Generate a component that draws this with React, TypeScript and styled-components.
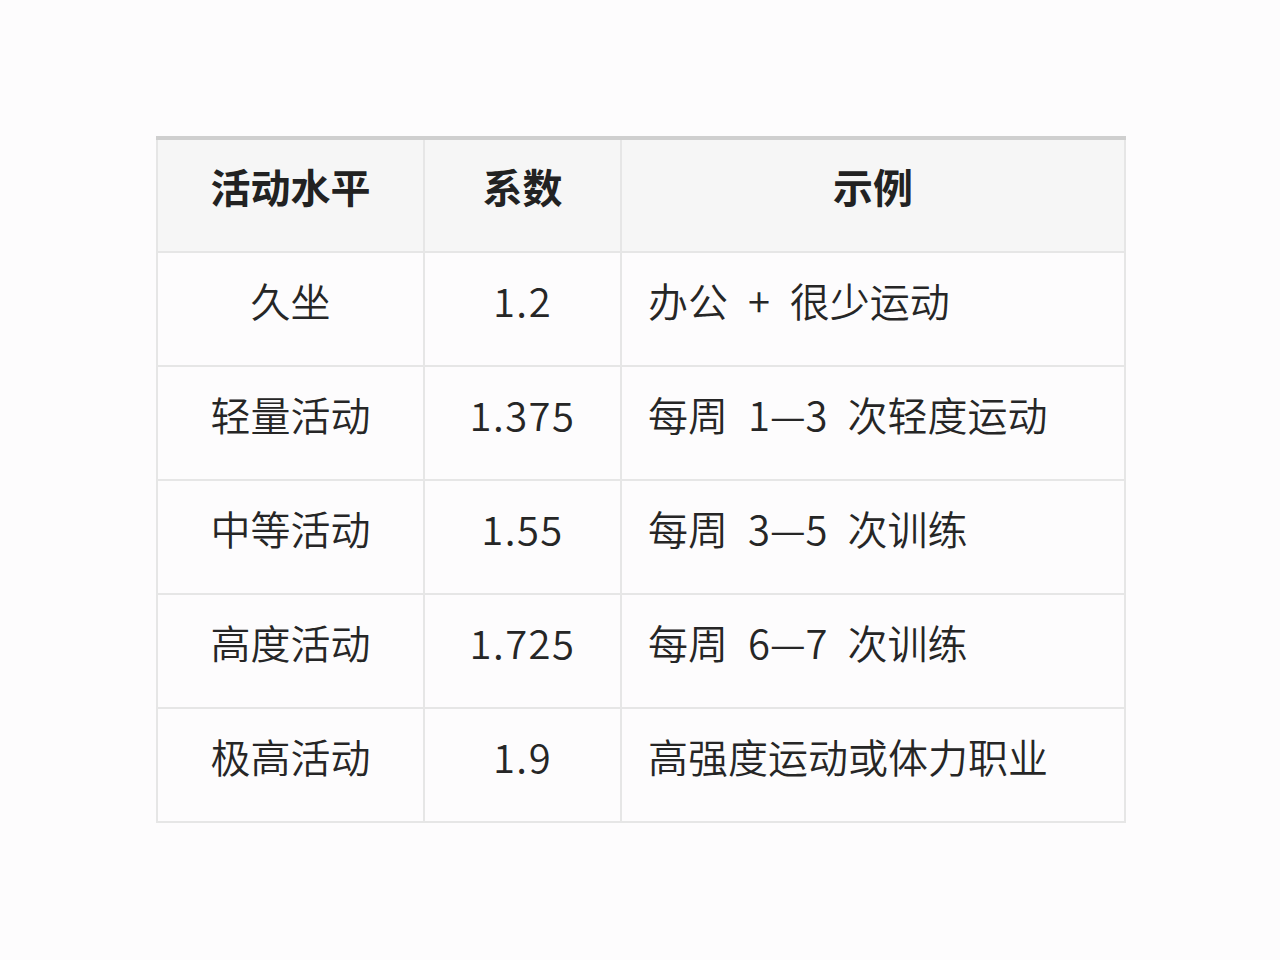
import React from 'react'
import styled, { createGlobalStyle } from 'styled-components'

const GlobalStyle = createGlobalStyle`
  html, body {
    margin: 0;
    padding: 0;
    background: #fdfcfd;
  }
  body {
    font-family: "Noto Sans CJK SC", "Noto Sans", sans-serif;
    color: #2b2b2b;
  }
`

const Page = styled.div`
  width: 1280px;
  height: 960px;
  padding-top: 136px;
  padding-left: 156px;
  box-sizing: border-box;
`

const Table = styled.table`
  width: 968px;
  border-collapse: collapse;
  table-layout: fixed;
  border-top: 4px solid #cfcfcf;
`

const HeadCell = styled.th`
  height: 92px;
  background: #f6f6f6;
  border: 2px solid #e6e6e6;
  border-top: none;
  font-size: 40px;
  font-weight: 700;
  color: #222;
  text-align: center;
  vertical-align: middle;
  padding: 0 0 19px;
`

const Cell = styled.td<{ $align?: 'left' | 'center'; $numeric?: boolean }>`
  height: 94px;
  border: 2px solid #e6e6e6;
  font-size: 40px;
  font-weight: 350;
  color: #262626;
  text-align: ${({ $align }) => $align || 'center'};
  vertical-align: middle;
  padding: ${({ $align }) => ($align === 'left' ? '0 0 18px 26px' : '0 0 18px')};
  white-space: nowrap;
  word-spacing: ${({ $align }) => ($align === 'left' ? '11px' : '0')};
  letter-spacing: ${({ $numeric }) => ($numeric ? '1.5px' : '0')};
`

const rows = [
  { level: '久坐', factor: '1.2', example: '办公 + 很少运动' },
  { level: '轻量活动', factor: '1.375', example: '每周 1—3 次轻度运动' },
  { level: '中等活动', factor: '1.55', example: '每周 3—5 次训练' },
  { level: '高度活动', factor: '1.725', example: '每周 6—7 次训练' },
  { level: '极高活动', factor: '1.9', example: '高强度运动或体力职业' },
]

const App = () => (
  <>
    <GlobalStyle />
    <Page>
      <Table>
        <colgroup>
          <col style={{ width: 267 }} />
          <col style={{ width: 197 }} />
          <col style={{ width: 504 }} />
        </colgroup>
        <thead>
          <tr>
            <HeadCell>活动水平</HeadCell>
            <HeadCell>系数</HeadCell>
            <HeadCell>示例</HeadCell>
          </tr>
        </thead>
        <tbody>
          {rows.map((row) => (
            <tr key={row.level}>
              <Cell>{row.level}</Cell>
              <Cell $numeric>{row.factor}</Cell>
              <Cell $align="left">{row.example}</Cell>
            </tr>
          ))}
        </tbody>
      </Table>
    </Page>
  </>
)

export default App
